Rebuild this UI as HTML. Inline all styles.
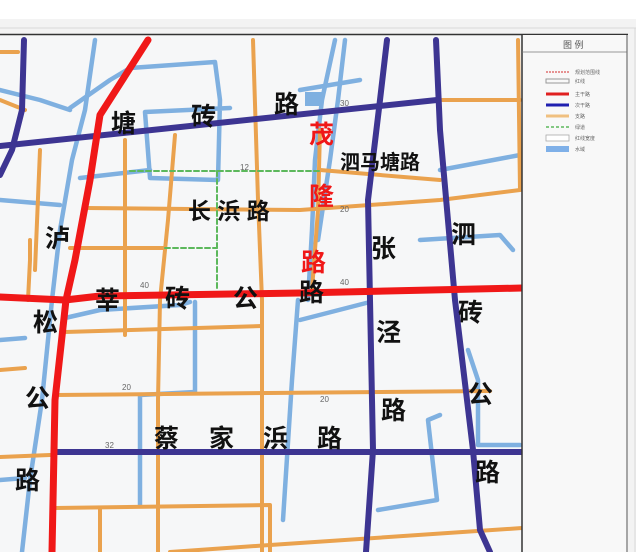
<!DOCTYPE html>
<html><head><meta charset="utf-8"><style>
html,body{margin:0;padding:0;background:#fff;width:641px;height:552px;overflow:hidden}
svg{display:block}
text{font-family:"Liberation Sans","Noto Sans CJK SC",sans-serif;font-weight:bold}
</style></head><body>
<svg width="641" height="552" viewBox="0 0 641 552" xmlns="http://www.w3.org/2000/svg">
<rect x="0" y="0" width="641" height="552" fill="#fff"/>
<rect x="0" y="19" width="636" height="533" fill="#f3f3f3"/>
<line x1="0" y1="28" x2="636" y2="28" stroke="#d8d8d8"/>
<line x1="635" y1="28" x2="635" y2="552" stroke="#d8d8d8"/>
<rect x="0" y="34" width="628" height="518" fill="#f6f7f8"/>
<line x1="0" y1="34.5" x2="628" y2="34.5" stroke="#333" stroke-width="1.5"/>
<g fill="none" stroke-linecap="round" stroke-linejoin="round">
<g stroke="#7fb0e0" stroke-width="4.5">
<path d="M95 40 L85 110 L72 160 L60 230 L52 300 L42 400 L30 480 L22 552"/>
<path d="M0 90 L40 100 L70 110"/>
<path d="M70 108 L110 80 L130 68 L215 62 L220 100 L218 180 L150 178 L145 112 L230 108"/>
<path d="M0 200 L60 205"/>
<path d="M80 178 L150 170"/>
<path d="M335 40 L322 100 L315 160 L312 230 L308 300"/>
<path d="M300 90 L330 85 L360 80"/>
<path d="M345 40 L338 100 L330 160 L318 240"/>
<path d="M440 170 L520 155"/>
<path d="M420 240 L500 235 L513 250"/>
<path d="M300 320 L370 302"/>
<path d="M65 318 L100 310 L180 305 L190 302"/>
<path d="M195 302 L195 392 L140 395 L140 505"/>
<path d="M298 300 L292 380 L283 520"/>
<path d="M440 415 L428 420 L437 500 L378 510"/>
<path d="M468 350 L478 380 L478 445 L520 445"/>
<path d="M0 480 L25 478"/>
<path d="M0 340 L25 338"/>
</g>
<rect x="305" y="92" width="18" height="14" fill="#7fb0e0" stroke="none"/>
<g stroke="#eaa24e" stroke-width="4">
<path d="M85 208 L300 210 L440 200 L520 190"/>
<path d="M70 248 L165 248"/>
<path d="M125 140 L125 335"/>
<path d="M175 135 L168 220 L160 300 L158 400 L158 552"/>
<path d="M253 40 L258 200 L262 300 L262 552"/>
<path d="M320 130 L318 210 L312 290"/>
<path d="M518 40 L520 190"/>
<path d="M440 100 L520 100"/>
<path d="M320 170 L440 180"/>
<path d="M65 332 L262 326"/>
<path d="M55 395 L490 391"/>
<path d="M55 508 L270 505 L270 552"/>
<path d="M170 552 L270 545 L522 528"/>
<path d="M0 457 L50 455"/>
<path d="M0 370 L25 368"/>
<path d="M0 52 L18 52"/>
<path d="M0 100 L25 110"/>
<path d="M40 150 L35 270"/>
<path d="M100 508 L100 552"/>
<path d="M30 240 L30 260 L28 300"/>
</g>
<g stroke="#5cb85c" stroke-width="2" stroke-dasharray="5,3">
<path d="M130 171 L320 171"/>
<path d="M217 171 L217 290"/>
<path d="M165 248 L217 248"/>
</g>
<g stroke="#3d3592" stroke-width="6">
<path d="M0 146 L437 100"/>
<path d="M436 40 L440 130 L455 300 L473 450 L480 530 L490 552"/>
<path d="M387 40 L380 100 L368 200 L370 300 L373 450 L366 552"/>
<path d="M24 40 L22 110 L12 150 L0 175"/>
<path d="M55 452 L522 452"/>
</g>
<g stroke="#f01818" stroke-width="7">
<path d="M148 40 L100 115 L90 180 L75 260 L66 300 L55 400 L52 552"/>
<path d="M0 297 L65 300 L100 296 L300 293 L522 288"/>
</g>
</g>
<g font-size="8" fill="#666">
<text x="340" y="106" style="font-weight:normal">30</text>
<text x="240" y="170" style="font-weight:normal">12</text>
<text x="140" y="288" style="font-weight:normal">40</text>
<text x="340" y="285" style="font-weight:normal">40</text>
<text x="122" y="390" style="font-weight:normal">20</text>
<text x="320" y="402" style="font-weight:normal">20</text>
<text x="105" y="448" style="font-weight:normal">32</text>
<text x="340" y="212" style="font-weight:normal">20</text>
</g>
<g font-size="25" fill="#111">
<text x="111" y="132">塘</text><text x="191" y="125">砖</text><text x="274" y="113">路</text>
<text x="188" y="219" font-size="23">长 浜 路</text>
<text x="340" y="169" font-size="20">泗马塘路</text>
<text x="45" y="247">泸</text><text x="33" y="331">松</text><text x="25" y="407">公</text><text x="15" y="489">路</text>
<text x="95" y="309">莘</text><text x="165" y="307">砖</text><text x="233" y="307">公</text><text x="299" y="301">路</text>
<text x="371" y="257">张</text><text x="376" y="341">泾</text><text x="381" y="419">路</text>
<text x="451" y="243">泗</text><text x="458" y="321">砖</text><text x="468" y="403">公</text><text x="475" y="481">路</text>
<text x="154" y="447">蔡</text><text x="209" y="447">家</text><text x="263" y="447">浜</text><text x="317" y="447">路</text>
</g>
<g font-size="25" fill="#f01818">
<text x="309" y="143">茂</text><text x="309" y="205">隆</text><text x="301" y="271">路</text>
</g>
<rect x="522" y="35" width="106" height="517" fill="#f8f8f8"/>
<line x1="522" y1="35" x2="522" y2="552" stroke="#333" stroke-width="1.5"/>
<line x1="627" y1="35" x2="627" y2="552" stroke="#555" stroke-width="1"/>
<line x1="522" y1="52" x2="627" y2="52" stroke="#777" stroke-width="0.8"/>
<text x="563" y="48" font-size="9" fill="#555" style="font-weight:normal">图 例</text>
<g stroke-width="3">
<line x1="546" y1="72" x2="569" y2="72" stroke="#e07070" stroke-width="1.5" stroke-dasharray="2,1"/>
<rect x="546" y="79" width="23" height="4" fill="none" stroke="#999" stroke-width="1"/>
<line x1="546" y1="94" x2="569" y2="94" stroke="#e02020"/>
<line x1="546" y1="105" x2="569" y2="105" stroke="#2020b0"/>
<line x1="546" y1="116" x2="569" y2="116" stroke="#f0c080"/>
<line x1="546" y1="127" x2="569" y2="127" stroke="#5cb85c" stroke-width="1.5" stroke-dasharray="3,2"/>
<rect x="546" y="135" width="23" height="6" fill="#fff" stroke="#aaa" stroke-width="0.8"/>
<rect x="546" y="146" width="23" height="6" fill="#7fb0e8" stroke="none"/>
</g>
<g font-size="5" fill="#666">
<text x="575" y="74" style="font-weight:normal">规划范围线</text>
<text x="575" y="83" style="font-weight:normal">红线</text>
<text x="575" y="96" style="font-weight:normal">主干路</text>
<text x="575" y="107" style="font-weight:normal">次干路</text>
<text x="575" y="118" style="font-weight:normal">支路</text>
<text x="575" y="129" style="font-weight:normal">绿道</text>
<text x="575" y="140" style="font-weight:normal">红线宽度</text>
<text x="575" y="151" style="font-weight:normal">水域</text>
</g>
</svg>
</body></html>
